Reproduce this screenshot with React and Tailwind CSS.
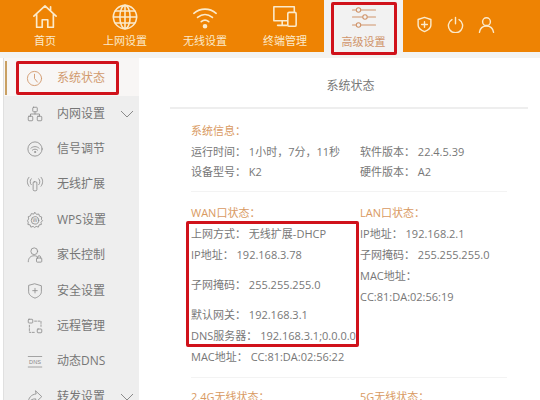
const FONT = "font-['Open_Sans','Noto_Sans_CJK_SC',sans-serif]";

const S = ({ children, size = 24, vb = 24, sw = 1.5, className = "" }) => (
  <svg width={size} height={size} viewBox={`0 0 ${vb} ${vb}`} fill="none" stroke="currentColor" strokeWidth={sw} strokeLinecap="round" strokeLinejoin="round" className={className}>
    {children}
  </svg>
);

const TopItems = [
  { label: "首页", icon: (
    <S size={26} vb={28} sw={1.8}>
      <path d="M2 13 14 2l12 11M5 11v14h6v-8h6v8h6V11M20 3v4" />
    </S>
  ) },
  { label: "上网设置", icon: (
    <S size={26} vb={28} sw={1.7}>
      <circle cx="14" cy="14" r="12.5" /><ellipse cx="14" cy="14" rx="5.5" ry="12.5" />
      <path d="M14 1.5v25M1.5 14h25M3.5 7.5h21M3.5 20.5h21" />
    </S>
  ) },
  { label: "无线设置", icon: (
    <S size={26} vb={28} sw={1.8}>
      <path d="M2 10c7-6 17-6 24 0M6 14.5c5-4 11-4 16 0M10 19c2.500-2 5.500-2 8 0" />
      <circle cx="14" cy="24" r="1.600" fill="currentColor" />
    </S>
  ) },
  { label: "终端管理", icon: (
    <S size={26} vb={28} sw={1.7}>
      <path d="M19 18H2V3h22v5M11 18v4M6 23h10" />
      <rect x="17" y="9" width="9" height="15" rx="1.500" className="fill-[#ee8303]" />
    </S>
  ) },
];

const SideItems = [
  { label: "内网设置", chev: true, icon: <><rect x="9" y="3" width="6" height="6" rx="1" /><rect x="3" y="15" width="6" height="6" rx="1" /><rect x="15" y="15" width="6" height="6" rx="1" /><path d="M12 9v3M6 15v-3h12v3" /></> },
  { label: "信号调节", icon: <><circle cx="12" cy="12" r="9.500" /><path d="M6.500 11c3-3 8-3 11 0M8.500 13.500c2-1.800 5-1.800 7 0" /><circle cx="12" cy="16" r=".8" /></> },
  { label: "无线扩展", icon: <><rect x="9.500" y="9" width="5" height="12" rx="1.500" /><path d="M7 13c-2-2-2-6 0-8M17 13c2-2 2-6 0-8M4 15C1 11 1 6 4 3M20 15c3-4 3-9 0-12" /></> },
  { label: "WPS设置", icon: <><path d="m12 2 2 2.500 3-.5 1 3 3 1-.5 3L22 13l-2 2 .5 3-3 .5-1 3-3-1-2 1.500-2-1.500-3 1-1-3-3-.5.5-3L2 13l1.500-2.500-.5-3 3-1 1-3 3 .5z" /><circle cx="12" cy="12.500" r="5" /><text x="12" y="15" fontSize="7" textAnchor="middle" fill="currentColor" stroke="none" fontFamily="Liberation Sans">W</text></> },
  { label: "家长控制", icon: <><circle cx="11" cy="7" r="4.500" /><path d="M3 21c0-5 3-8 8-8 1.500 0 2.500.3 3.500.8" /><rect x="14" y="16" width="7" height="5.500" rx="1" /><path d="M15.500 16v-1a2 2 0 0 1 4 0v1" /></> },
  { label: "安全设置", icon: <><path d="M12 2.500 20.500 5v8c0 4-4 7-8.500 8.500C7.500 20 3.500 17 3.500 13V5z" /><path d="M12 8.500v6M9 11.500h6" /></> },
  { label: "远程管理", icon: <><rect x="3" y="3" width="6" height="5" rx="1" /><rect x="15" y="16" width="6" height="5" rx="1" /><path d="M11.500 5.500H20v7M4.500 11v9.500h7" strokeDasharray="2.500 2" /></> },
  { label: "动态DNS", icon: <><path d="M3 6h18M3 20h18" strokeWidth="1" /><text x="12" y="16" fontSize="7.500" textAnchor="middle" fill="currentColor" stroke="none" fontFamily="Liberation Sans">DNS</text></> },
  { label: "转发设置", chev: true, icon: <path d="M13 4l8 7.500-8 7.500v-4.500c-4 0-7 1-10 5 0-6 4-11 10-11.500z" /> },
];

const Chevron = () => (
  <svg width="14" height="8" viewBox="0 0 14 8" fill="none" stroke="#8a8a8a" strokeWidth="1"><path d="M1 1l6 6 6-6" /></svg>
);

const Row = ({ children, h = "h-[20.500px]", orange }) => (
  <div className={`${h} flex items-center whitespace-nowrap text-[11px] ${orange ? "text-[#d99a62]" : "text-[#777777]"}`}>{children}</div>
);

export default function App() {
  return (
    <div className={`relative w-[540px] h-[400px] overflow-hidden bg-white ${FONT}`}>
      <header className="h-[52px] bg-[#ee8303] flex pl-[5px] text-[#fbeacb]">
        {TopItems.map((t) => (
          <div key={t.label} className="w-[80px] flex flex-col items-center pt-[4px] shrink-0">
            {t.icon}
            <span className="text-[11px] leading-[14px] mt-[4px] whitespace-nowrap">{t.label}</span>
          </div>
        ))}
        <div className="w-[79px] h-[52px] ml-[-1px] bg-[#f2f2f2] flex flex-col items-center pt-[6px] text-[#d0946a] shrink-0">
          <S size={24} vb={24} sw={1.1}>
            <path d="M0.500 4h3.500M9 4h14.500M0.500 11h10M15.500 11h8M0.500 19h3.500M9 19h14.500" />
            <circle cx="6.500" cy="4" r="2.200" /><circle cx="13" cy="11" r="2.200" /><circle cx="6.500" cy="19" r="2.200" />
          </S>
          <span className="text-[11px] leading-[14px] mt-[5px]">高级设置</span>
        </div>
        <div className="flex items-center gap-[14px] pl-[13px] pb-[4px]">
          <S size={17} vb={24} sw={2}><path d="M12 2 21 5v8c0 4-4 7-9 9-5-2-9-5-9-9V5z" /><path d="M12 8v8M8 12h8" /></S>
          <S size={17} vb={24} sw={2}><path d="M7 5a10 10 0 1 0 10 0M12 2v9" /></S>
          <S size={17} vb={24} sw={2}><circle cx="12" cy="8" r="5.500" /><path d="M2 23c1-6 5-9 10-9s9 3 10 9" /></S>
        </div>
      </header>

      <div className="h-[6px] bg-[#f3f3f1]" />

      <div className="flex h-[342px]">
        <aside className="w-[136px] shrink-0 ml-[3px] bg-[#eeeeee] border-l border-[#e0e0e0]">
          <div className="h-[38px] pt-[2px] bg-[#f8f6f5] flex items-center relative text-[#d19a6e]">
            <div className="absolute left-[1px] top-[3px] h-[34px] w-[2px] bg-[#c9a063]" />
            <div className="w-[53px] flex justify-center pl-[8px]">
              <S size={17} sw={1.300}><circle cx="12" cy="12" r="10" /><path d="M12 6v6l4 5" /></S>
            </div>
            <span className="text-[12px]">系统状态</span>
          </div>
          {SideItems.map((s) => (
            <div key={s.label} className="h-[35.400px] flex items-center text-[#767676]">
              <div className="w-[53px] flex justify-center pl-[8px] text-[#8a8a8a]">
                <S size={18} sw={1.100}>{s.icon}</S>
              </div>
              <span className="text-[12px] flex-1 whitespace-nowrap">{s.label}</span>
              {s.chev && <span className="mr-[5px]"><Chevron /></span>}
            </div>
          ))}
        </aside>

        <main className="flex-1 min-w-0 pl-[31px] pr-[12px]">
          <div className="h-[51px] flex items-center justify-center pl-[3px] pt-[6px] border-b-2 border-[#eeeeee] text-[12px] text-[#777777]">系统状态</div>
          <div className="mx-[21px]">
            <section className="pt-[12px] border-b border-[#f3f3f3] h-[83px]">
              <div className="flex">
                <div className="w-[169px]">
                  <Row orange>系统信息：</Row>
                  <Row>运行时间： 1小时，7分，11秒</Row>
                  <Row>设备型号： K2</Row>
                </div>
                <div>
                  <Row>&nbsp;</Row>
                  <Row>软件版本： 22.4.5.39</Row>
                  <Row>硬件版本： A2</Row>
                </div>
              </div>
            </section>
            <section className="pt-[11px] h-[186px] border-b border-[#f3f3f3]">
              <div className="flex">
                <div className="w-[169px]">
                  <Row orange>WAN口状态：</Row>
                  <Row>上网方式： 无线扩展-DHCP</Row>
                  <Row h="h-[22px]">IP地址： 192.168.3.78</Row>
                  <Row h="h-[30px]"><span className="pt-[9px]">子网掩码： 255.255.255.0</span></Row>
                  <Row h="h-[30px]"><span className="pt-[9px]">默认网关： 192.168.3.1</span></Row>
                  <Row>DNS服务器： 192.168.3.1;0.0.0.0</Row>
                  <Row>MAC地址： CC:81:DA:02:56:22</Row>
                </div>
                <div>
                  <Row orange>LAN口状态：</Row>
                  <Row>IP地址： 192.168.2.1</Row>
                  <Row h="h-[22px]">子网掩码： 255.255.255.0</Row>
                  <Row>MAC地址：</Row>
                  <Row>CC:81:DA:02:56:19</Row>
                </div>
              </div>
            </section>
            <div className="flex pt-[9px]">
              <div className="w-[169px]"><Row orange>2.4G无线状态：</Row></div>
              <Row orange>5G无线状态：</Row>
            </div>
          </div>
        </main>
      </div>

      <div className="absolute left-[331px] top-[2px] w-[66px] h-[53px] border-[3px] border-[#d0121b] rounded-[2px]" />
      <div className="absolute left-[16px] top-[61px] w-[103px] h-[34px] border-[3px] border-[#d0121b] rounded-[2px]" />
      <div className="absolute left-[186px] top-[221px] w-[173px] h-[126px] border-[3px] border-[#d0121b] rounded-[2px]" />
    </div>
  );
}
